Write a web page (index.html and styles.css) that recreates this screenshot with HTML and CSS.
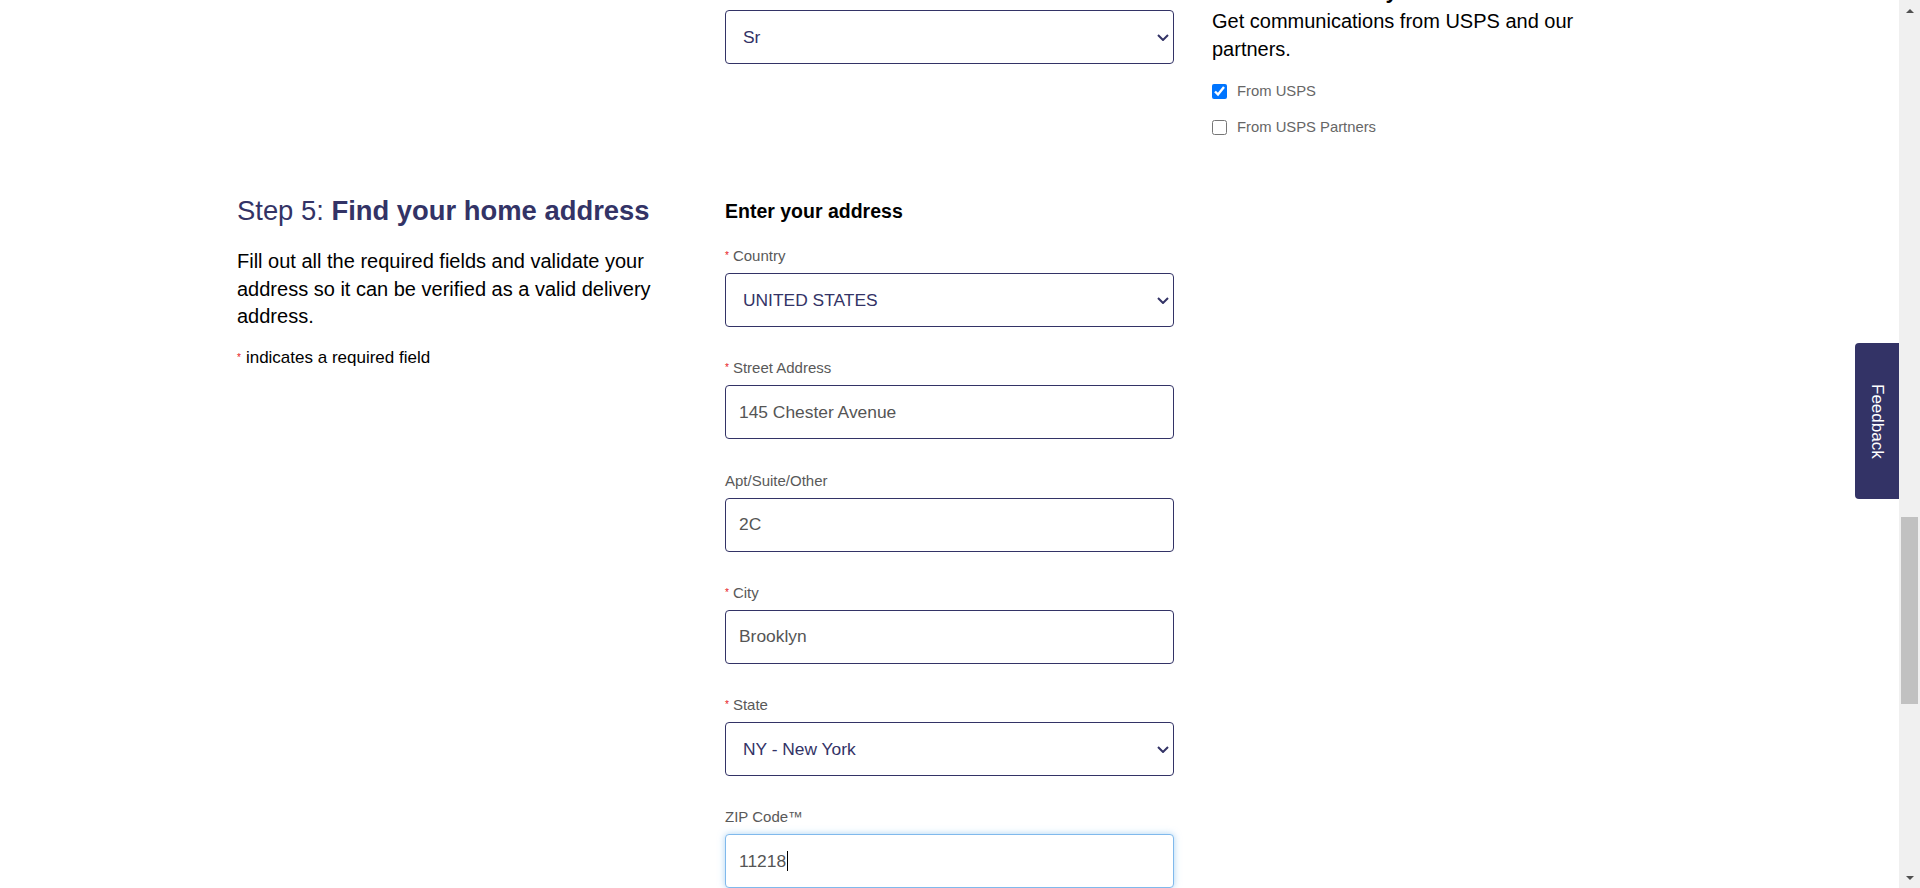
FILE: index.html
```html
<!DOCTYPE html>
<html lang="en">
<head>
<meta charset="utf-8">
<title>USPS - Create Account</title>
<link rel="stylesheet" href="styles.css">
</head>
<body>
<div class="window">
  <div class="page">
    <main class="content">
      <section class="step">
        <div class="step-intro"></div>
        <div class="step-fields">
          <div class="field">
            <label class="field-label" for="suffix">Suffix</label>
            <div class="select-wrap">
              <select id="suffix" class="control select"><option>Sr</option></select>
              <svg class="chevron" width="12" height="7" viewBox="0 0 12 7"><path d="M1 1l5 5 5-5" fill="none" stroke="#333366" stroke-width="2"/></svg>
            </div>
          </div>
        </div>
        <div class="step-aside">
          <h3 class="aside-title">Informed Delivery</h3>
          <p class="aside-text">Get communications from USPS and our partners.</p>
          <ul class="check-list">
            <li class="check-item"><input type="checkbox" id="from-usps" class="check" checked><label for="from-usps" class="check-label">From USPS</label></li>
            <li class="check-item"><input type="checkbox" id="from-partners" class="check"><label for="from-partners" class="check-label">From USPS Partners</label></li>
          </ul>
        </div>
      </section>

      <section class="step">
        <div class="step-intro">
          <h2 class="step-title">Step 5: <strong>Find your home address</strong></h2>
          <p class="step-text">Fill out all the required fields and validate your address so it can be verified as a valid delivery address.</p>
          <p class="required-note"><span class="req">*</span>indicates a required field</p>
        </div>
        <div class="step-fields">
          <h3 class="fields-title">Enter your address</h3>
          <div class="field">
            <label class="field-label" for="country"><span class="req">*</span>Country</label>
            <div class="select-wrap">
              <select id="country" class="control select"><option>UNITED STATES</option></select>
              <svg class="chevron" width="12" height="7" viewBox="0 0 12 7"><path d="M1 1l5 5 5-5" fill="none" stroke="#333366" stroke-width="2"/></svg>
            </div>
          </div>
          <div class="field">
            <label class="field-label" for="street"><span class="req">*</span>Street Address</label>
            <input id="street" class="control input" type="text" value="145 Chester Avenue">
          </div>
          <div class="field">
            <label class="field-label" for="apt">Apt/Suite/Other</label>
            <input id="apt" class="control input" type="text" value="2C">
          </div>
          <div class="field">
            <label class="field-label" for="city"><span class="req">*</span>City</label>
            <input id="city" class="control input" type="text" value="Brooklyn">
          </div>
          <div class="field">
            <label class="field-label" for="state"><span class="req">*</span>State</label>
            <div class="select-wrap">
              <select id="state" class="control select"><option>NY - New York</option></select>
              <svg class="chevron" width="12" height="7" viewBox="0 0 12 7"><path d="M1 1l5 5 5-5" fill="none" stroke="#333366" stroke-width="2"/></svg>
            </div>
          </div>
          <div class="field">
            <label class="field-label" for="zip">ZIP Code™</label>
            <div class="input-wrap">
              <input id="zip" class="control input is-focused" type="text" value="11218">
              <span class="caret"></span>
            </div>
          </div>
        </div>
        <div class="step-aside"></div>
      </section>
    </main>
    <button class="feedback-tab" type="button">Feedback</button>
  </div>
  <div class="scrollbar">
    <div class="scroll-btn"><span class="arrow-up"></span></div>
    <div class="scroll-track"><div class="scroll-thumb"></div></div>
    <div class="scroll-btn"><span class="arrow-down"></span></div>
  </div>
</div>
</body>
</html>
```

FILE: styles.css
```css
html, body {
  margin: 0;
  padding: 0;
  height: 888px;
  overflow: hidden;
  background: #fff;
}

body {
  font-family: "Liberation Sans", Arial, Helvetica, sans-serif;
  color: #000;
}

.window {
  display: flex;
  height: 888px;
}

.page {
  position: relative;
  flex: 1;
  overflow: hidden;
}

.content {
  margin-top: -17px;
  padding-left: 237px;
}

.step {
  display: grid;
  grid-template-columns: 450px 449px 420px;
  column-gap: 38px;
  align-items: start;
}

.step + .step {
  margin-top: 50px;
}

/* left column */
.step-title {
  margin: 0;
  font-size: 27.4px;
  line-height: 32px;
  font-weight: 400;
  color: #333366;
}

.step-title strong {
  font-weight: 700;
}

.step-text {
  margin: 21px 0 0;
  font-size: 20px;
  line-height: 27.5px;
}

.required-note {
  margin: 17.5px 0 0;
  font-size: 17px;
  line-height: 20px;
}

.req {
  color: #e71921;
  font-size: 10px;
  vertical-align: 2px;
  margin-right: 4px;
}

.required-note .req {
  margin-right: 5px;
}

/* middle column */
.fields-title {
  margin: 4px 0 23px;
  font-size: 19.5px;
  line-height: 24px;
  font-weight: 700;
}

.field {
  margin-bottom: 31.25px;
}

.field-label {
  display: block;
  margin-bottom: 7px;
  font-size: 15px;
  line-height: 20px;
  color: #595959;
}

.select-wrap,
.input-wrap {
  position: relative;
}

.control {
  display: block;
  box-sizing: border-box;
  width: 449px;
  height: 54px;
  margin: 0;
  border: 1px solid #333366;
  border-radius: 4px;
  background: #fff;
  font-family: "Liberation Sans", Arial, Helvetica, sans-serif;
  font-size: 17.4px;
  outline: none;
}

.select {
  appearance: none;
  -webkit-appearance: none;
  padding: 0 36px 0 17px;
  color: #333366;
}

.input {
  padding: 0 13px;
  color: #555;
}

.input.is-focused {
  border-color: #80b9ec;
  box-shadow: 0 0 7px rgba(102, 175, 233, 0.55);
  caret-color: transparent;
}

.chevron {
  position: absolute;
  right: 5px;
  top: 50%;
  margin-top: -3px;
  pointer-events: none;
}

.caret {
  position: absolute;
  left: 62px;
  top: 17px;
  width: 1px;
  height: 20px;
  background: #000;
}

/* right column */
.aside-title {
  margin: -3px 0 0;
  font-size: 22px;
  line-height: 22px;
  font-weight: 700;
}

.aside-text {
  margin: 6px 0 0;
  font-size: 20px;
  line-height: 27.5px;
}

.check-list {
  list-style: none;
  margin: 10px 0 0;
  padding: 0;
}

.check-item {
  display: flex;
  align-items: center;
  height: 36px;
}

.check {
  width: 15px;
  height: 15px;
  margin: 0;
  accent-color: #0075ff;
}

.check-label {
  margin-left: 10px;
  font-size: 14.8px;
  color: #666;
}

/* feedback tab */
.feedback-tab {
  position: absolute;
  right: 0;
  top: 343px;
  width: 44px;
  height: 156px;
  padding: 0;
  border: 0;
  border-radius: 4px 0 0 4px;
  background: #333366;
  color: #fff;
  font-family: "Liberation Sans", Arial, Helvetica, sans-serif;
  font-size: 17px;
  writing-mode: vertical-rl;
  display: flex;
  align-items: center;
  justify-content: center;
}

/* scrollbar */
.scrollbar {
  width: 21px;
  flex: none;
  display: flex;
  flex-direction: column;
  background: #f0f0f0;
}

.scroll-btn {
  height: 21px;
  display: flex;
  align-items: center;
  justify-content: center;
}

.arrow-up {
  width: 0;
  height: 0;
  border-left: 4.5px solid transparent;
  border-right: 4.5px solid transparent;
  border-bottom: 4.5px solid #505050;
}

.arrow-down {
  width: 0;
  height: 0;
  border-left: 4.5px solid transparent;
  border-right: 4.5px solid transparent;
  border-top: 4.5px solid #505050;
}

.scroll-track {
  flex: 1;
  padding: 496px 2px 0;
}

.scroll-thumb {
  height: 187px;
  background: #c1c1c1;
}
```
